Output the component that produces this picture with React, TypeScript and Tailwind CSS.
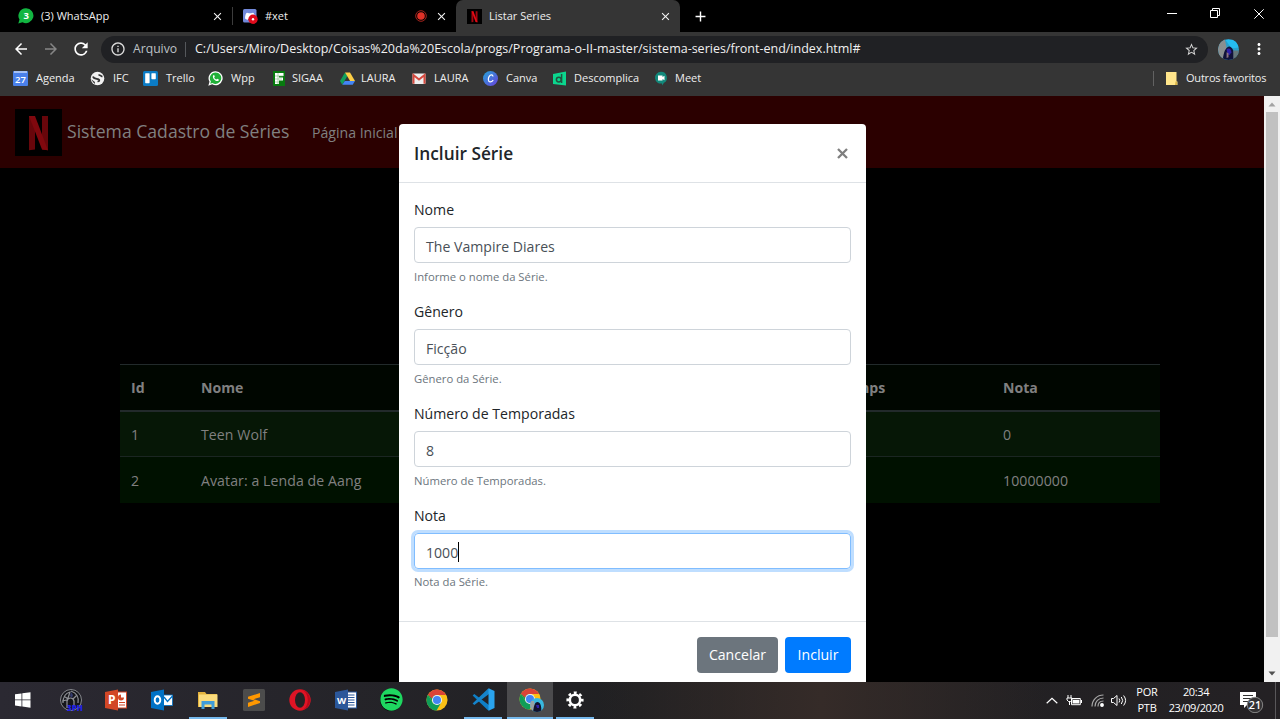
import React from "react";
import { MdArrowBack, MdArrowForward, MdRefresh, MdInfoOutline, MdStarBorder, MdMoreVert, MdClose, MdAdd } from "react-icons/md";
import { FaWhatsapp, FaSpotify } from "react-icons/fa";

const NetflixIcon = ({ className, fill = "#e50914", dark = "#a00710" }: { className: string; fill?: string; dark?: string }) => (
  <svg className={className} viewBox="0 0 47 47">
    <rect width="47" height="47" fill="#000" />
    <path d="M14 7h6v33.500l-6 .8zM27 7h6v34.300l-6-.8z" fill={dark} />
    <path d="M14 7h6l13 34.300-6-.8z" fill={fill} />
  </svg>
);

const Chrome = ({ children }: { children?: React.ReactNode }) => (
  <svg className="h-[22px] w-[22px]" viewBox="0 0 48 48">
    <circle cx="24" cy="24" r="23" fill="#fbc116" />
    <path d="M4.100 12.500A23 23 0 0 0 23 47l10.500-18L24 24l-9.500 5.500z" fill="#0f9d58" />
    <path d="M4.100 12.500 14.500 29.500 24 24V13z" fill="#0f9d58" />
    <path d="M4.100 12.500A23 23 0 0 1 43.900 13H24a11 11 0 0 0-10.500 8.500z" fill="#db4437" />
    <circle cx="24" cy="24" r="11" fill="#f1f1f1" />
    <circle cx="24" cy="24" r="8.800" fill="#4285f4" />
    {children}
  </svg>
);

const Avatar = () => (
  <svg className="h-[21px] w-[21px] rounded-full" viewBox="0 0 22 22">
    <rect width="22" height="22" fill="#2b9fc9" />
    <path d="M0 0h7l2 9-2 13H0z" fill="#8a8f90" />
    <path d="M8 1h10l4 8-8 1z" fill="#25bdf0" />
    <path d="M5 22c1-9 3-13 6-14s7 4 6 14z" fill="#10123a" />
    <path d="M9 11c2-2 5-1 5 3l-2 3-2-1z" fill="#2e20a8" />
    <path d="M9 14l2 1v4l-2 1z" fill="#8c7280" />
    <path d="M16 12h6v10h-6z" fill="#66777a" />
  </svg>
);

const bookmarks: { label: string; width: string; gap: string; icon: React.ReactNode }[] = [
  {
    label: "Agenda", width: "w-[77px]", gap: "ml-[8px]",
    icon: (
      <svg className="h-[15px] w-[15px]" viewBox="0 0 15 15">
        <rect y="0" width="15" height="15" rx="1" fill="#4a80ea" />
        <rect x="1" width="13" height="2" fill="#a5c0f4" />
        <text x="7.500" y="11.800" fontSize="9.500" fontWeight="600" textAnchor="middle" fill="#fff">27</text>
      </svg>
    ),
  },
  {
    label: "IFC", width: "w-[53px]", gap: "ml-[8px]",
    icon: (
      <svg className="h-[15px] w-[15px]" viewBox="0 0 15 15">
        <circle cx="7.500" cy="7.500" r="6.800" fill="#f1f1f1" />
        <path d="M3 5.500c.5 2.500 4 2 5.500 2.800s1 2-1 2.200M12.500 5.500C11 5.500 11 4 8.500 3.800" stroke="#333" strokeWidth="1.700" fill="none" />
        <path d="M1.200 8.500c1.500.3 1.800 1.800 3.800 2.500l-.5 2z" fill="#333" />
      </svg>
    ),
  },
  {
    label: "Trello", width: "w-[65px]", gap: "ml-[8px]",
    icon: (
      <svg className="h-[15px] w-[15px]" viewBox="0 0 15 15">
        <rect width="15" height="15" rx="1.500" fill="#0b7bc4" />
        <rect x="2.200" y="2.200" width="4.400" height="10" rx=".6" fill="#fff" />
        <rect x="8.400" y="2.200" width="4.400" height="6" rx=".6" fill="#fff" />
      </svg>
    ),
  },
  {
    label: "Wpp", width: "w-[64px]", gap: "ml-[8px]",
    icon: (
      <svg className="h-[15px] w-[15px]" viewBox="0 0 15 15">
        <path d="M7.700.2A7 7 0 1 1 4.200 13.300L.3 14.700l1.200-4A7 7 0 0 1 7.700.2z" fill="#fff" />
        <path d="M7.700 1.500A5.700 5.700 0 1 1 4.500 12l-2.300.8.700-2.300A5.700 5.700 0 0 1 7.700 1.500z" fill="#20b038" />
        <path d="M5.300 4.200c-1.800 2.300 2.500 7.200 5.300 5.500l.2-1.200-1.600-.8-.8.8c-1-.3-1.900-1.200-2.200-2.100l.6-.8-.7-1.500z" fill="#fff" />
      </svg>
    ),
  },
  {
    label: "SIGAA", width: "w-[68px]", gap: "ml-[5px]",
    icon: (
      <svg className="h-[15px] w-[15px]" viewBox="0 0 15 15">
        <rect x="1" y="0" width="12" height="15" fill="#087a0f" />
        <path d="M3 2h8.500v3H7v1.500h4V9.500H7V13H3z" fill="#fff" />
        <path d="M3 5h8M3 8h7M3 11h4M6 2v11" stroke="#79b87b" strokeWidth=".6" />
      </svg>
    ),
  },
  {
    label: "LAURA", width: "w-[72px]", gap: "ml-[6px]",
    icon: (
      <svg className="h-[15px] w-[15px]" viewBox="0 0 15 15">
        <path d="M5 1.500 0 10l2.300 3.800L7.400 5z" fill="#11a05c" />
        <path d="M5 1.500h5L15 10h-4.900z" fill="#fcce45" />
        <path d="M4.800 10H15l-2.300 3.800H2.300z" fill="#4385f5" />
      </svg>
    ),
  },
  {
    label: "LAURA", width: "w-[71px]", gap: "ml-[7px]",
    icon: (
      <svg className="h-[15px] w-[15px]" viewBox="0 0 15 15">
        <rect x=".5" y="2.500" width="13" height="10.500" rx="1" fill="#eee" />
        <path d="M1.500 12.800V4l5.500 4.500L12.500 4v8.800" stroke="#d5483d" strokeWidth="2" fill="none" />
      </svg>
    ),
  },
  {
    label: "Canva", width: "w-[69px]", gap: "ml-[8px]",
    icon: (
      <svg className="h-[15px] w-[15px]" viewBox="0 0 15 15">
        <defs>
          <linearGradient id="canva" x1="0" y1="0" x2="1" y2="1">
            <stop offset="0" stopColor="#24a5d8" /><stop offset="1" stopColor="#6a3fdc" />
          </linearGradient>
        </defs>
        <circle cx="7.500" cy="7.500" r="7.500" fill="url(#canva)" />
        <path d="M10 5.500C9.800 3.500 7.500 3.400 6.200 5.300S5 10.700 7 10.900s2.500-.8 3.200-1.700" fill="none" stroke="#fff" strokeWidth="1.200" />
      </svg>
    ),
  },
  {
    label: "Descomplica", width: "w-[102px]", gap: "ml-[7px]",
    icon: (
      <svg className="h-[15px] w-[15px]" viewBox="0 0 15 15">
        <path d="M1 3 14 .5v14L1 13z" fill="#0bd68e" />
        <circle cx="6.800" cy="8.600" r="2.400" fill="none" stroke="#20543f" strokeWidth="1.500" />
        <path d="M9.600 3v9" stroke="#20543f" strokeWidth="1.500" />
      </svg>
    ),
  },
  {
    label: "Meet", width: "w-[80px]", gap: "ml-[6px]",
    icon: (
      <svg className="h-[15px] w-[15px]" viewBox="0 0 15 15">
        <path d="M7 .8a5.900 5.900 0 0 1 3 11L8 14.500v-2A5.900 5.900 0 1 1 7 .8z" fill="#12897b" />
        <path d="M4 4.500h4.500v1.600L10.500 4.700v4.600L8.500 8v1.500H4z" fill="#fff" />
      </svg>
    ),
  },
];

const tasks: { name: string; mark: string; active?: boolean; icon: React.ReactNode }[] = [
  {
    name: "start", mark: "",
    icon: <svg className="h-4 w-4" viewBox="0 0 16 16" fill="#fff"><path d="M0 2.300 6.500 1.400v6.100H0zM7.300 1.300 15.500.2v7.300H7.300zM0 8.300h6.500v6.100L0 13.500zM7.300 8.300h8.200v7.500l-8.200-1.200z" /></svg>,
  },
  {
    name: "game", mark: "",
    icon: (
      <svg className="ml-[3px] h-6 w-6" viewBox="0 0 24 24">
        <circle cx="12" cy="12" r="10.500" fill="#15161b" stroke="#85878c" strokeWidth="1" />
        <path d="M4 15c0-7 3-10 7-11l-3 9M12 3c6 2 8 6 7 12M8 13c1-4 6-4 7 0v5M5 8l4 3M18 7l-4 4M3 13l5-1v8" stroke="#8e9095" strokeWidth="1.200" fill="none" />
        <path d="M12 4l2 3-1 3-2-2z" fill="#343b6c" />
        <text x="16" y="23" fontSize="8" fontWeight="800" textAnchor="middle" fill="#2323e8">3PH</text>
      </svg>
    ),
  },
  {
    name: "powerpoint", mark: "",
    icon: (
      <svg className="ml-[2px] h-[22px] w-[22px]" viewBox="0 0 22 22">
        <rect x="11" y="3" width="10.500" height="16" fill="#fff" stroke="#d24726" />
        <path d="M14 13.500h6M14 16h6" stroke="#d24726" strokeWidth="1.200" />
        <path d="M16 5.500a3 3 0 1 0 3 3h-3z" fill="#d24726" />
        <path d="M0 3 13 .5v21L0 19z" fill="#d24726" />
        <text x="6.800" y="15.300" fontSize="12" fontWeight="700" textAnchor="middle" fill="#fff">P</text>
      </svg>
    ),
  },
  {
    name: "outlook", mark: "",
    icon: (
      <svg className="ml-[2px] h-[22px] w-[22px]" viewBox="0 0 22 22">
        <rect x="11" y="6" width="10.500" height="10.500" fill="#fff" stroke="#0072c6" strokeWidth=".8" />
        <path d="m13 8 3.500 4.500L21.500 7" stroke="#0072c6" strokeWidth="1.300" fill="none" />
        <path d="M0 3 13 .5v21L0 19z" fill="#0072c6" />
        <ellipse cx="6.500" cy="11" rx="2.800" ry="3.700" stroke="#fff" strokeWidth="1.900" fill="none" />
      </svg>
    ),
  },
  {
    name: "explorer", mark: "ml-px w-[38px] bg-[#76b9ed]",
    icon: (
      <svg className="ml-[2px] h-[20px] w-[20px]" viewBox="0 0 20 20">
        <path d="M0 2h7l1.500 2H19v13H0z" fill="#e4b33e" />
        <path d="M1 4.500h18.500V17H1z" fill="#fbdc7d" />
        <path d="M3.500 19v-8h13v8h-3v-4.500h-7V19z" fill="#3f9ddb" />
      </svg>
    ),
  },
  {
    name: "sublime", mark: "",
    icon: (
      <svg className="ml-[2px] h-[22px] w-[22px]" viewBox="0 0 22 22">
        <rect width="22" height="22" rx="1.500" fill="#4c4c4c" />
        <path d="M5 7.800 17 4v4.200l-6.500 2 6.500 2V14L5 18v-4.200l6.500-2-6.500-2z" fill="#ff9800" />
      </svg>
    ),
  },
  {
    name: "opera", mark: "",
    icon: (
      <svg className="ml-px h-[22px] w-[22px]" viewBox="0 0 22 22">
        <circle cx="11" cy="11" r="10.700" fill="#df1425" />
        <path d="M12 .4a10.700 10.700 0 0 1 0 21.200 8.500 8.500 0 0 0 3-1.600c5-4 5-14 0-18a8 8 0 0 0-3-1.600z" fill="#b80a1b" />
        <ellipse cx="11" cy="11" rx="5" ry="7.800" fill="#252225" />
      </svg>
    ),
  },
  {
    name: "word", mark: "",
    icon: (
      <svg className="ml-px h-[22px] w-[22px]" viewBox="0 0 22 22">
        <rect x="11" y="3" width="10.500" height="16" fill="#fff" stroke="#2b579a" />
        <path d="M13 6h6.500M13 8.500h6.500M13 11h6.500M13 13.500h6.500M13 16h6.500" stroke="#2b579a" strokeWidth="1" />
        <path d="M0 3 13 .5v21L0 19z" fill="#2b579a" />
        <text x="6.500" y="14.500" fontSize="9.500" fontWeight="700" textAnchor="middle" fill="#fff">W</text>
      </svg>
    ),
  },
  {
    name: "spotify", mark: "",
    icon: <span className="flex h-[22px] w-[22px] items-center justify-center rounded-full bg-black text-[#1ed760]"><FaSpotify size={23} className="shrink-0" /></span>,
  },
  { name: "chrome", mark: "", icon: <Chrome /> },
  {
    name: "code", mark: "w-[38px] bg-[#76b9ed]",
    icon: (
      <svg className="h-[23px] w-[23px]" viewBox="0 0 23 23">
        <path d="M.6 7.500 2.300 6l15 11.300v5.200L15.700 22z" fill="#0f7fc6" />
        <path d="M.6 15.500 2.300 17l15-11.300V.5L15.700 1z" fill="#1584cc" />
        <path d="M16.500.3 22.500 3v17l-6 2.700z" fill="#2aa4ee" />
      </svg>
    ),
  },
  {
    name: "chrome-profile", mark: "w-[46px] bg-[#76b9ed]", active: true,
    icon: (
      <div className="relative ml-[3px] h-[23px] w-[25px]">
        <Chrome />
        <div className="absolute right-0 bottom-[-1px] h-[14px] w-[14px] overflow-hidden rounded-full">
          <svg className="h-full w-full" viewBox="0 0 14 14">
            <rect width="14" height="14" fill="#38b8df" />
            <path d="M0 3h4l1 5-2 6H0z" fill="#96a2a4" />
            <path d="M3 14C4 7 5 4 7.500 4S12 8 11 14z" fill="#10122e" />
            <path d="M6 7h3v3H7z" fill="#2e20a8" />
          </svg>
        </div>
      </div>
    ),
  },
  {
    name: "settings", mark: "w-[38px] bg-[#76b9ed]",
    icon: (
      <svg className="h-[18px] w-[18px]" viewBox="0 0 18 18" fill="none" stroke="#fff">
        <circle cx="9" cy="9" r="5.200" strokeWidth="2.600" />
        <circle cx="9" cy="9" r="7.300" strokeWidth="2.600" strokeDasharray="2.867 2.867" strokeDashoffset="1.433" />
      </svg>
    ),
  },
];

const rows = [
  ["1", "Teen Wolf", "", "", "0"],
  ["2", "Avatar: a Lenda de Aang", "", "", "10000000"],
];

const fields = [
  { label: "Nome", value: "The Vampire Diares", help: "Informe o nome da Série." },
  { label: "Gênero", value: "Ficção", help: "Gênero da Série." },
  { label: "Número de Temporadas", value: "8", help: "Número de Temporadas." },
  { label: "Nota", value: "1000", help: "Nota da Série.", focus: true },
];

const TabClose = () => <MdClose size={13} className="shrink-0 text-[#f4f4f4]" />;

function BrowserHeader() {
  return (
    <header className="h-[96px] shrink-0 bg-[#353535] text-[11px] text-[#eeeeee]">
      <div className="flex h-[32px] bg-black">
        <div className="flex w-[232px] items-center pl-[18px] pr-[8px]">
          <svg className="h-4 w-4" viewBox="0 0 16 16">
            <path d="M8.200.3A7.400 7.400 0 1 1 4.500 14.200L.3 15.500l1.200-4A7.400 7.400 0 0 1 8.200.3z" fill="#12b541" />
            <text x="8.200" y="11.400" fontSize="9.500" fontWeight="700" textAnchor="middle" fill="#fff">3</text>
          </svg>
          <span className="ml-[7px] flex-1">(3) WhatsApp</span>
          <TabClose />
        </div>
        <div className="my-[7px] w-px bg-[#3c3c3c]" />
        <div className="flex w-[223px] items-center pl-[10px] pr-[8px]">
          <svg className="h-[15px] w-[15px]" viewBox="0 0 15 15">
            <rect width="13.500" height="13.500" rx="1.500" fill="#7289da" />
            <path d="M2 9.500C2 6 3 4 4 3.700l2 .5h2l2-.5c1 .3 2 2.500 2 6L9.500 11 9 10H5l-.5 1z" fill="#fff" />
            <circle cx="10" cy="10.300" r="4.700" fill="#e00b1c" />
            <circle cx="10" cy="10.300" r="1.200" fill="#fff" />
          </svg>
          <span className="ml-[7px] flex-1">#xet</span>
          <svg className="mr-[8px] h-3 w-3" viewBox="0 0 12 12"><circle cx="6" cy="6" r="3.800" fill="#e03127" /><circle cx="6" cy="6" r="5.300" fill="none" stroke="#a3231c" /></svg>
          <TabClose />
        </div>
        <div className="flex w-[224px] items-center rounded-t-[7px] bg-[#353535] pl-[11px] pr-[8px]">
          <NetflixIcon className="h-[15px] w-[15px]" />
          <span className="ml-[7px] flex-1">Listar Series</span>
          <TabClose />
        </div>
        <div className="flex w-[41px] items-center justify-center"><MdAdd size={17} className="text-white" /></div>
        <div className="flex-1" />
        <div className="flex w-[113px] items-center justify-between pb-[5px] pr-[16px]">
          <div className="h-px w-[10px] bg-white" />
          <svg className="h-[11px] w-[11px]" viewBox="0 0 11 11" fill="none" stroke="#fff"><path d="M.5 2.500h7v7h-7zM2.500 2.500v-2h7v7h-2" /></svg>
          <svg className="h-[10px] w-[10px]" viewBox="0 0 10 10" fill="none" stroke="#fff"><path d="m.3.3 9.400 9.400M9.700.3.300 9.700" /></svg>
        </div>
      </div>
      <div className="flex h-[34px] items-center">
        <MdArrowBack size={18} className="ml-[12px] text-white" />
        <MdArrowForward size={18} className="ml-[12px] text-[#868686]" />
        <MdRefresh size={20} className="ml-[11px] text-white" />
        <div className="ml-[10px] flex h-[27px] w-[1107px] items-center rounded-full bg-[#202124] pl-[9px] pr-[9px] text-[12.2px]">
          <MdInfoOutline size={16} className="text-[#dddddd]" />
          <span className="ml-[7px] w-[46px] text-[#bdc1c6]">Arquivo</span>
          <div className="ml-[6px] h-[15px] w-px bg-[#55585c]" />
          <span className="ml-[9px] flex-1 whitespace-nowrap text-[12.5px] text-[#f0f0f0]">C:/Users/Miro/Desktop/Coisas%20da%20Escola/progs/Programa-o-II-master/sistema-series/front-end/index.html#</span>
          <MdStarBorder size={15} className="text-[#d5d5d5]" />
        </div>
        <div className="ml-[10px]"><Avatar /></div>
        <MdMoreVert size={18} className="ml-[11px] text-white" />
      </div>
      <div className="flex h-[30px] items-center pb-[5px] pl-[13px]">
        {bookmarks.map((b, i) => (
          <div key={i} className={"flex shrink-0 items-center " + b.width}>
            {b.icon}
            <span className={b.gap}>{b.label}</span>
          </div>
        ))}
        <div className="flex-1" />
        <div className="mr-[12px] h-[15px] w-px bg-[#626262]" />
        <svg className="h-[14px] w-[12px]" viewBox="0 0 12 14"><path d="M0 0h10.500v9.500h1V13H0z" fill="#ffe58b" /><path d="M9.500 9.500h1.500V13H9z" fill="#d9b447" /></svg>
        <span className="ml-[8px] w-[94px] whitespace-nowrap tracking-[-0.2px]">Outros favoritos</span>
      </div>
    </header>
  );
}

function SeriesModal() {
  return (
    <div className="absolute inset-y-0 left-[399px] w-[467px] overflow-hidden pt-[28px]">
      <section className="h-[570px] rounded-[4px] bg-white text-[14.1px] text-[#212529]">
        <div className="flex h-[59px] items-center justify-between border-b border-[#dee2e6] pl-[15px] pr-[18px]">
          <h5 className="pt-[2px] text-[17.3px] font-semibold">Incluir Série</h5>
          <svg className="h-[11px] w-[11px]" viewBox="0 0 11 11"><path d="m1 1 9 9M10 1l-9 9" stroke="#7f7f7f" strokeWidth="2.300" /></svg>
        </div>
        <form className="flex h-[439px] flex-col border-b border-[#dee2e6] px-[15px] pt-[14px]">
          {fields.map((f) => (
            <div key={f.label} className="h-[102px]">
              <label className="mb-[7px] block h-[23px] leading-[26px]">{f.label}</label>
              <div className={"flex h-[36px] items-center rounded-[4px] border px-[11px] pt-[3px] text-[#495057] " + (f.focus ? "mt-px border-[#80bdff] ring-[3px] ring-[#bfdeff]" : "border-[#ced4da]")}>
                <span>{f.value}</span>
                {f.focus && <span className="mb-[2px] h-[20px] w-px bg-black" />}
              </div>
              <small className={"block text-[11.3px] leading-[18px] text-[#6c757d] " + (f.focus ? "mt-[4px]" : "mt-[5px]")}>{f.help}</small>
            </div>
          ))}
        </form>
        <div className="flex justify-end gap-[7px] pr-[15px] pt-[15px] text-white">
          <button className="h-[36px] w-[81px] rounded-[4px] bg-[#6c757d]">Cancelar</button>
          <button className="h-[36px] w-[66px] rounded-[4px] bg-[#007bff]">Incluir</button>
        </div>
      </section>
    </div>
  );
}

function Page() {
  return (
    <main className="relative flex h-[586px] shrink-0 bg-black text-[#808080]">
      <div className="w-[1264px]">
        <nav className="flex h-[72px] items-center bg-[#2b0000] pl-[15px]">
          <NetflixIcon className="h-[47px] w-[47px]" fill="#80080e" dark="#68060b" />
          <span className="ml-[5px] w-[245px] whitespace-nowrap pb-px text-[17.6px]">Sistema Cadastro de Séries</span>
          <span className="pt-[2px] text-[14.1px]">Página Inicial</span>
        </nav>
        <table className="ml-[120px] mt-[196px] w-[1040px] table-fixed border-collapse text-left text-[14.1px]">
          <colgroup>
            <col className="w-[70px]" /><col className="w-[420px]" /><col className="w-[218px]" /><col className="w-[164px]" /><col />
          </colgroup>
          <thead>
            <tr className="h-[46px] border-b-2 border-t border-[#222a2b] bg-[#000600]">
              {["Id", "Nome", "", "Temps", "Nota"].map((h, i) => <th key={i} className="px-[11px] pt-px font-bold">{h}</th>)}
            </tr>
          </thead>
          <tbody>
            {rows.map((r, i) => (
              <tr key={i} className={i === 0 ? "h-[46px] border-b border-[#1b2622] bg-[#061706]" : "h-[46px] bg-[#001100]"}>
                {r.map((c, j) => <td key={j} className="whitespace-nowrap px-[11px] pt-[2px] tracking-[0.08px]">{c}</td>)}
              </tr>
            ))}
          </tbody>
        </table>
      </div>
      <div className="flex w-4 flex-col items-center bg-[#f1f1f1]">
        <svg className="h-[16px] w-4" viewBox="0 0 16 16"><path d="M4.500 10.500 8 6.500l3.500 4z" fill="#a3a3a3" /></svg>
        <div className="h-[525px] w-[12px] bg-[#c1c1c1]" />
        <div className="flex-1" />
        <svg className="h-[16px] w-4" viewBox="0 0 16 16"><path d="M4.500 5.500 8 9.500l3.500-4z" fill="#505050" /></svg>
      </div>
      <SeriesModal />
    </main>
  );
}

function Taskbar() {
  return (
    <footer className="flex h-[37px] shrink-0 bg-linear-to-r from-[#2b2932] via-[#202022] to-[#242124] text-[11px] text-white">
      {tasks.map((t) => (
        <div key={t.name} className={"flex w-[46px] shrink-0 flex-col items-center " + (t.active ? "translate-x-px bg-[#4b4b4d]" : "")}>
          <div className="flex flex-1 items-center justify-center">{t.icon}</div>
          <div className={"h-[2px] " + t.mark} />
        </div>
      ))}
      <div className="flex-1 bg-linear-to-r from-transparent via-[#352b28] to-transparent" />
      <div className="flex w-[235px] shrink-0 items-center">
        <svg className="ml-px h-[7px] w-[12px]" viewBox="0 0 12 7"><path d="m.7 6.300 5.300-5 5.300 5" fill="none" stroke="#fff" strokeWidth="1.200" /></svg>
        <svg className="ml-[8px] h-[12px] w-[16px]" viewBox="0 0 16 12">
          <path d="M2 0v3M5 0v3M1 3h5v2L4.500 6.500h-2L1 5zM3.500 6v4" stroke="#fff" fill="none" />
          <path d="M5.500 9.700V3.500h8.800v6.200z" fill="none" stroke="#fff" /><path d="M6.500 4.800h6.800v3.700H6.500zM15 5h1v3h-1z" fill="#fff" />
        </svg>
        <svg className="ml-[9px] h-[13px] w-[13px]" viewBox="0 0 13 13" fill="none" stroke="#a8a8a8" strokeWidth="1.200">
          <path d="M1 12.500C1 6 6 1 12.500 1M4 12.500C4 7.500 7.500 4 12.500 4M7 12.500C7 9 9 7 12.500 7" />
          <circle cx="11" cy="11" r="1.300" fill="#fff" stroke="#fff" />
        </svg>
        <svg className="ml-[7px] h-[13px] w-[16px]" viewBox="0 0 16 13" fill="none" stroke="#fff">
          <path d="M.5 4.500h2l3.500-3v10l-3.500-3h-2z" /><path d="M8 4.500q1.500 2 0 4M10.300 3q2.800 3.500 0 7M12.600 1.500q4 5 0 10" />
        </svg>
        <div className="ml-[4px] w-[32px] pb-[2px] text-center leading-[16px] tracking-[-0.2px]">POR<br />PTB</div>
        <div className="w-[66px] whitespace-nowrap pb-[2px] text-center leading-[16px] tracking-[-0.38px]">20:34<br />23/09/2020</div>
        <div className="relative ml-[11px] h-[24px] w-[24px]">
          <svg className="h-full w-full" viewBox="0 0 24 24">
            <path d="M0 3h16v13H7l-3 3v-3H0z" fill="#fff" /><path d="M3 6.500h10M3 9.500h10M3 12.500h6" stroke="#333" />
            <circle cx="15" cy="16" r="7.700" fill="#343234" stroke="#858585" />
            <text x="15" y="20" fontSize="10.800" fontWeight="600" textAnchor="middle" fill="#fff">21</text>
          </svg>
        </div>
        <div className="flex-1" />
        <div className="mr-[4px] h-full w-px bg-[#59575a]" />
      </div>
    </footer>
  );
}

export default function App() {
  return (
    <div className="flex h-[719px] w-[1280px] flex-col overflow-hidden bg-black font-['Open_Sans','Noto_Sans',sans-serif]">
      <BrowserHeader />
      <Page />
      <Taskbar />
    </div>
  );
}
